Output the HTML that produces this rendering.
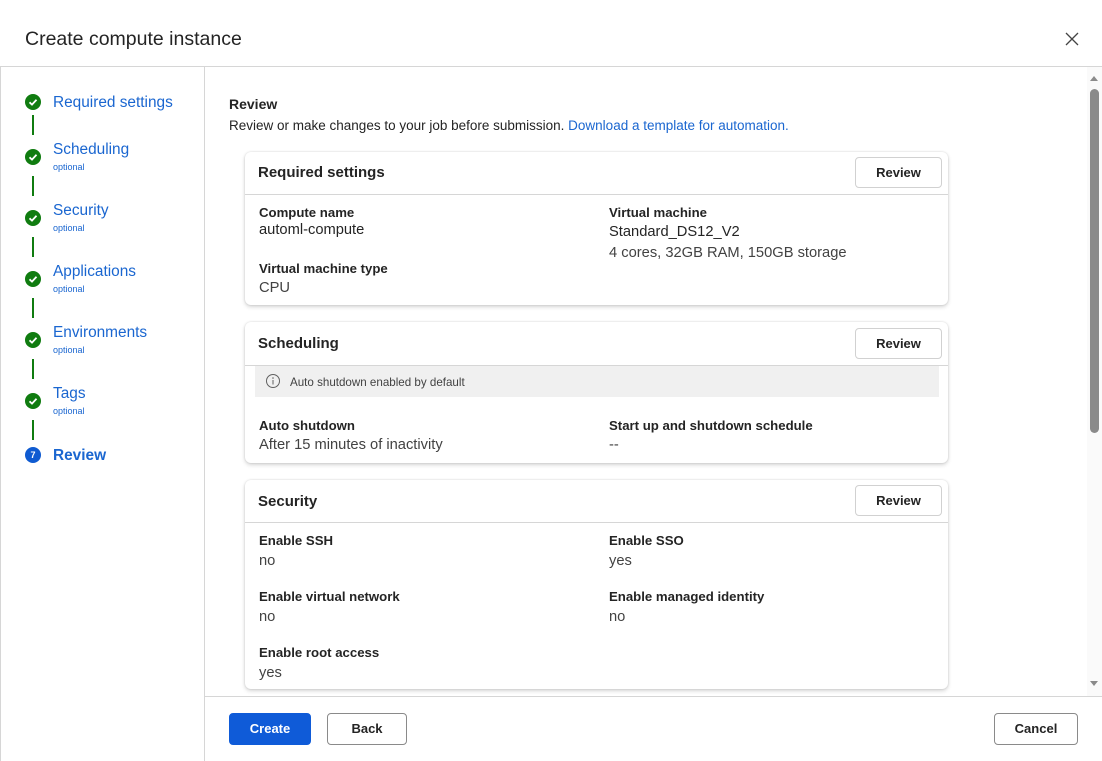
<!DOCTYPE html>
<html><head><meta charset="utf-8"><style>
*{box-sizing:border-box;margin:0;padding:0}
body{width:1102px;height:761px;overflow:hidden;background:#fff;font-family:"Liberation Sans",sans-serif;color:#242424;position:relative}
.a{position:absolute;white-space:nowrap}
.hl{position:absolute;background:#d6d6d6}
.step{position:absolute;left:53px;color:#1a66d0;font-size:15.4px;white-space:nowrap}
.opt{position:absolute;left:53px;color:#1a66d0;font-size:9px}
.ck{position:absolute;left:25px;width:16px;height:16px;border-radius:50%;background:#107c10}
.ck svg{position:absolute;left:0;top:0}
.vl{position:absolute;left:32px;width:2px;height:20px;background:#107c10}
.card{position:absolute;left:245px;width:703px;background:#fff;border-radius:6px;box-shadow:0 0 2px rgba(0,0,0,.14),0 2px 4px rgba(0,0,0,.16)}
.ct{position:absolute;left:13px;font-size:15px;font-weight:bold}
.cb{position:absolute;left:0;right:0;height:1px;background:#d6d6d6}
.btn{position:absolute;border:1px solid #d1d1d1;border-radius:4px;background:#fff;font-size:13px;font-weight:bold;text-align:center;line-height:29px}
.lb{position:absolute;font-size:13.2px;font-weight:bold;white-space:nowrap}
.vv{position:absolute;font-size:14.7px;color:#424242;white-space:nowrap}
</style></head><body>
<div class="a" style="left:25px;top:28px;font-size:19.5px;color:#242424">Create compute instance</div>
<svg class="a" style="left:1065px;top:32px" width="14" height="14"><path d="M1 1L13 13M13 1L1 13" stroke="#444" stroke-width="1.3"/></svg>
<div class="hl" style="left:0;top:66px;width:1102px;height:1px"></div>
<div class="hl" style="left:204px;top:66px;width:1px;height:695px"></div>
<div class="hl" style="left:0;top:66px;width:1px;height:695px"></div>

<div class="ck" style="top:94px"><svg width="16" height="16"><path d="M4.5 8.3L7 10.6L11.5 5.8" stroke="#fff" stroke-width="1.8" fill="none"/></svg></div>
<div class="step" style="top:94px">Required settings</div>
<div class="vl" style="top:115px"></div>
<div class="ck" style="top:149px"><svg width="16" height="16"><path d="M4.5 8.3L7 10.6L11.5 5.8" stroke="#fff" stroke-width="1.8" fill="none"/></svg></div>
<div class="step" style="top:141px">Scheduling</div><div class="opt" style="top:162px">optional</div>
<div class="vl" style="top:176px"></div>
<div class="ck" style="top:210px"><svg width="16" height="16"><path d="M4.5 8.3L7 10.6L11.5 5.8" stroke="#fff" stroke-width="1.8" fill="none"/></svg></div>
<div class="step" style="top:202px">Security</div><div class="opt" style="top:223px">optional</div>
<div class="vl" style="top:237px"></div>
<div class="ck" style="top:271px"><svg width="16" height="16"><path d="M4.5 8.3L7 10.6L11.5 5.8" stroke="#fff" stroke-width="1.8" fill="none"/></svg></div>
<div class="step" style="top:263px">Applications</div><div class="opt" style="top:284px">optional</div>
<div class="vl" style="top:298px"></div>
<div class="ck" style="top:332px"><svg width="16" height="16"><path d="M4.5 8.3L7 10.6L11.5 5.8" stroke="#fff" stroke-width="1.8" fill="none"/></svg></div>
<div class="step" style="top:324px">Environments</div><div class="opt" style="top:345px">optional</div>
<div class="vl" style="top:359px"></div>
<div class="ck" style="top:393px"><svg width="16" height="16"><path d="M4.5 8.3L7 10.6L11.5 5.8" stroke="#fff" stroke-width="1.8" fill="none"/></svg></div>
<div class="step" style="top:385px">Tags</div><div class="opt" style="top:406px">optional</div>
<div class="vl" style="top:420px"></div>
<div class="ck" style="top:447px;background:#0f5bd1;color:#fff;font-size:9px;font-weight:bold;text-align:center;line-height:16px">7</div>
<div class="step" style="top:447px;font-weight:bold">Review</div>

<div class="a" style="left:229px;top:96px;font-size:14px;font-weight:bold">Review</div>
<div class="a" style="left:229px;top:118px;font-size:13.5px">Review or make changes to your job before submission. <span style="color:#1a66d0">Download a template for automation.</span></div>

<div class="card" style="top:152px;height:153px">
 <div class="ct" style="top:12px">Required settings</div>
 <div class="btn" style="left:610px;top:5px;width:87px;height:31px">Review</div>
 <div class="cb" style="top:42px"></div>
 <div class="lb" style="left:14px;top:53px">Compute name</div>
 <div class="vv" style="left:14px;top:70px;color:#242424">automl-compute</div>
 <div class="lb" style="left:14px;top:109px">Virtual machine type</div>
 <div class="vv" style="left:14px;top:128px">CPU</div>
 <div class="lb" style="left:364px;top:53px">Virtual machine</div>
 <div class="vv" style="left:364px;top:72px;color:#242424">Standard_DS12_V2</div>
 <div class="vv" style="left:364px;top:93px">4 cores, 32GB RAM, 150GB storage</div>
</div>

<div class="card" style="top:322px;height:141px">
 <div class="ct" style="top:13px">Scheduling</div>
 <div class="btn" style="left:610px;top:6px;width:87px;height:31px">Review</div>
 <div class="cb" style="top:43px"></div>
 <div style="position:absolute;left:10px;top:44px;width:684px;height:31px;background:#f0f0f0"></div>
 <svg class="a" style="left:20px;top:51px" width="16" height="16"><circle cx="8" cy="8" r="6.5" stroke="#616161" fill="none"/><path d="M8 7V11.5" stroke="#616161"/><circle cx="8" cy="5" r=".8" fill="#616161"/></svg>
 <div class="a" style="left:45px;top:54px;font-size:11.6px;color:#424242">Auto shutdown enabled by default</div>
 <div class="lb" style="left:14px;top:96px">Auto shutdown</div>
 <div class="vv" style="left:14px;top:115px">After 15 minutes of inactivity</div>
 <div class="lb" style="left:364px;top:96px">Start up and shutdown schedule</div>
 <div class="vv" style="left:364px;top:115px">--</div>
</div>

<div class="card" style="top:480px;height:209px">
 <div class="ct" style="top:13px">Security</div>
 <div class="btn" style="left:610px;top:5px;width:87px;height:31px">Review</div>
 <div class="cb" style="top:42px"></div>
 <div class="lb" style="left:14px;top:53px">Enable SSH</div>
 <div class="vv" style="left:14px;top:73px">no</div>
 <div class="lb" style="left:364px;top:53px">Enable SSO</div>
 <div class="vv" style="left:364px;top:73px">yes</div>
 <div class="lb" style="left:14px;top:109px">Enable virtual network</div>
 <div class="vv" style="left:14px;top:129px">no</div>
 <div class="lb" style="left:364px;top:109px">Enable managed identity</div>
 <div class="vv" style="left:364px;top:129px">no</div>
 <div class="lb" style="left:14px;top:165px">Enable root access</div>
 <div class="vv" style="left:14px;top:185px">yes</div>
</div>

<div style="position:absolute;left:1087px;top:67px;width:15px;height:629px;background:#fafafa"></div>
<svg class="a" style="left:1089px;top:74px" width="10" height="8"><path d="M1 7L5 2L9 7Z" fill="#8a8a8a"/></svg>
<div style="position:absolute;left:1090px;top:89px;width:9px;height:344px;background:#8a8a8a;border-radius:5px"></div>
<svg class="a" style="left:1089px;top:680px" width="10" height="8"><path d="M1 1L5 6L9 1Z" fill="#8a8a8a"/></svg>

<div class="hl" style="left:204px;top:696px;width:898px;height:1px"></div>
<div class="btn" style="left:229px;top:713px;width:82px;height:32px;background:#0f5bd8;border-color:#0f5bd8;color:#fff;line-height:30px">Create</div>
<div class="btn" style="left:327px;top:713px;width:80px;height:32px;border-color:#8a8a8a;line-height:30px">Back</div>
<div class="btn" style="left:994px;top:713px;width:84px;height:32px;border-color:#8a8a8a;line-height:30px">Cancel</div>
</body></html>
